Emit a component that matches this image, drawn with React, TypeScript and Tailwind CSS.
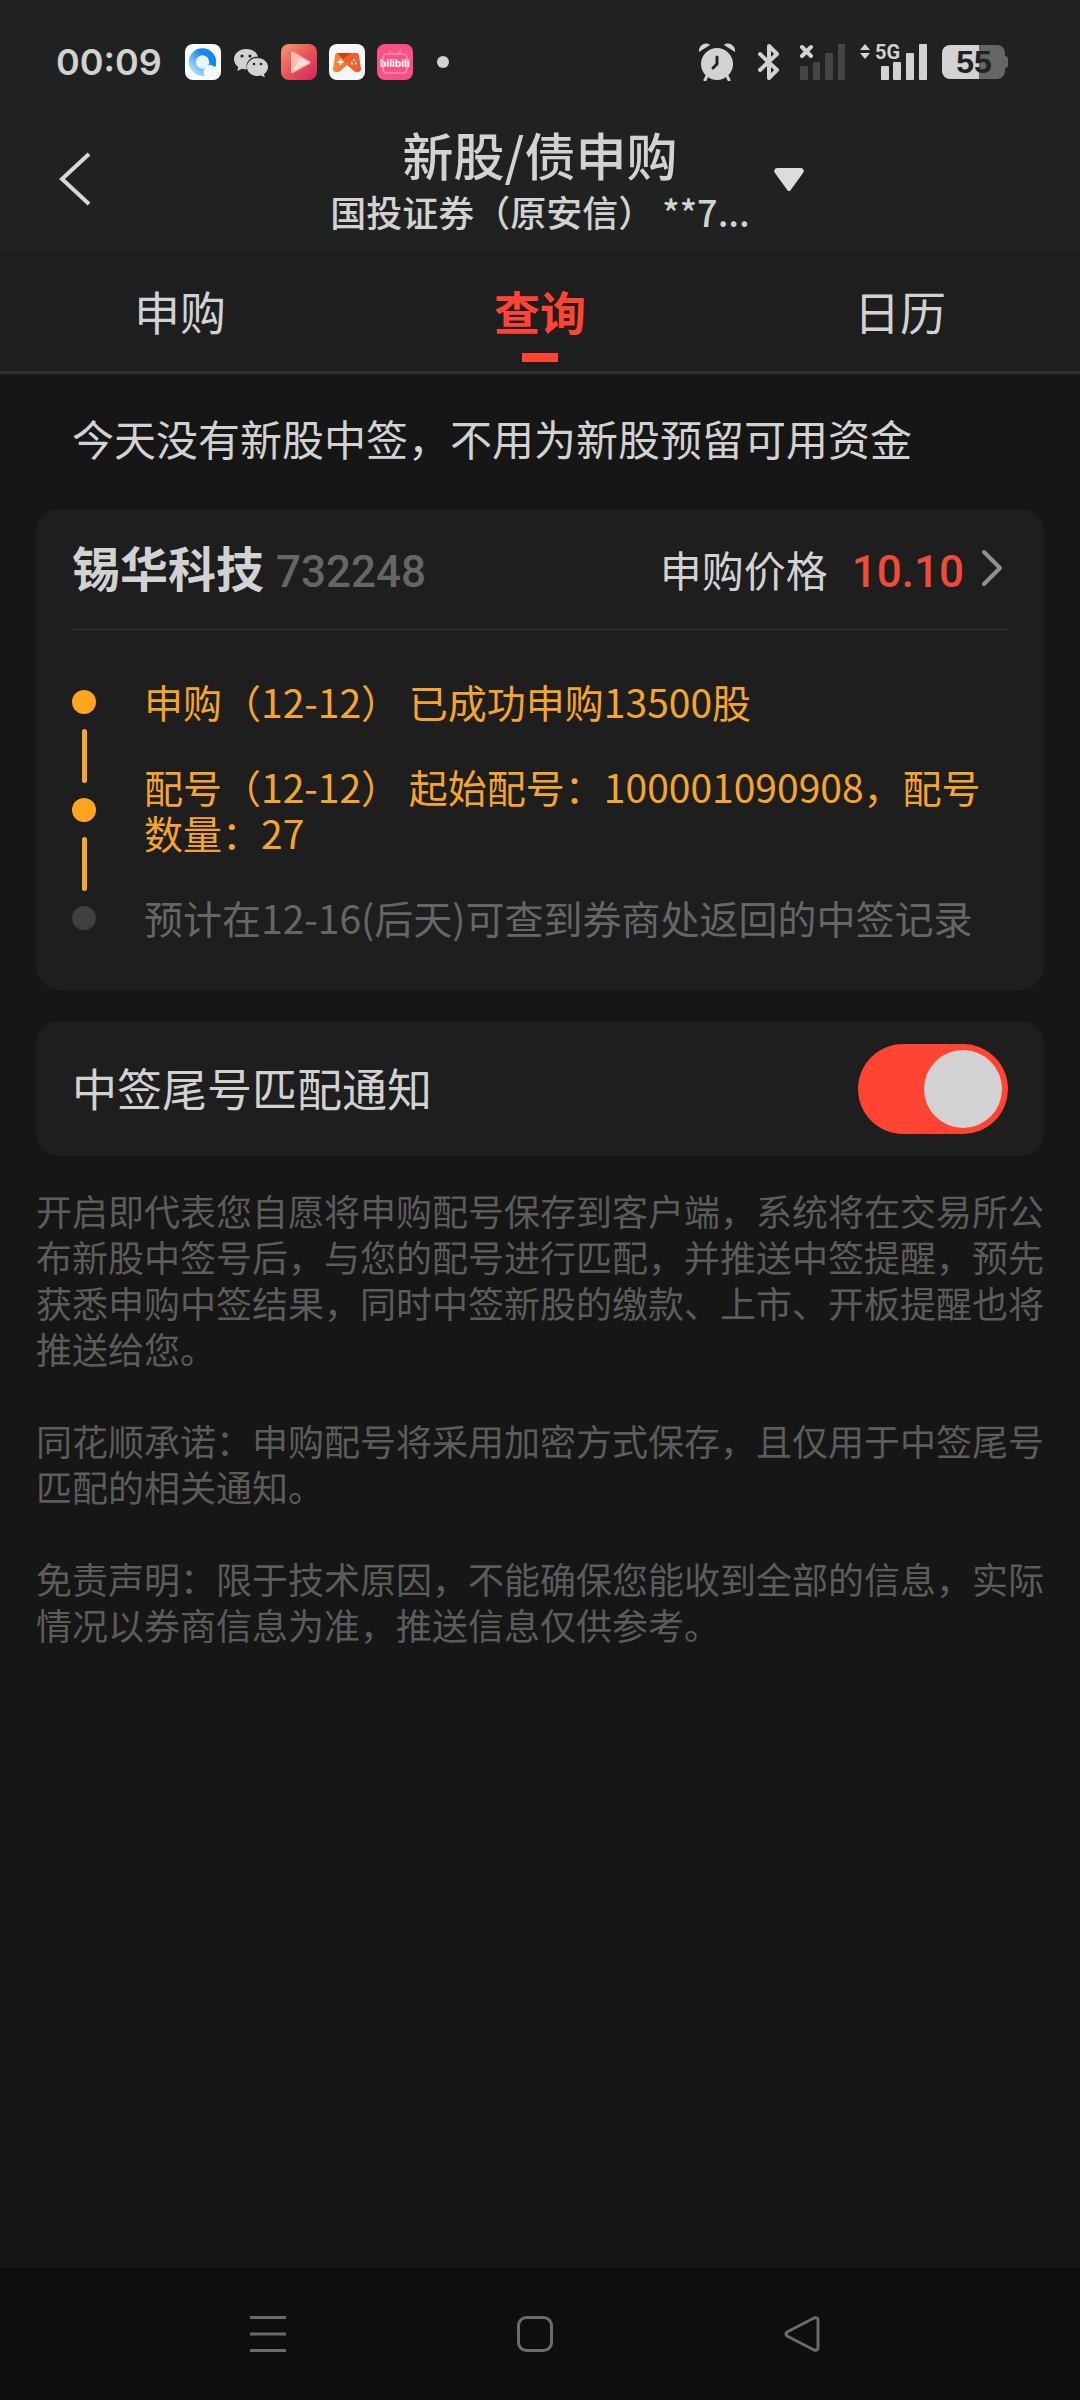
import { useState } from "react";

type Step = {
  id: number;
  text: string;
  done: boolean;
};

const tabs = [
  { key: "apply", label: "申购" },
  { key: "query", label: "查询" },
  { key: "calendar", label: "日历" },
];

const steps: Step[] = [
  { id: 1, text: "申购（12-12） 已成功申购13500股", done: true },
  { id: 2, text: "配号（12-12） 起始配号：100001090908，配号数量：27", done: true },
  { id: 3, text: "预计在12-16(后天)可查到券商处返回的中签记录", done: false },
];

const notes = [
  "开启即代表您自愿将申购配号保存到客户端，系统将在交易所公布新股中签号后，与您的配号进行匹配，并推送中签提醒，预先获悉申购中签结果，同时中签新股的缴款、上市、开板提醒也将推送给您。",
  "同花顺承诺：申购配号将采用加密方式保存，且仅用于中签尾号匹配的相关通知。",
  "免责声明：限于技术原因，不能确保您能收到全部的信息，实际情况以券商信息为准，推送信息仅供参考。",
];

const BrowserIcon = () => (
  <svg width="36" height="36" viewBox="0 0 36 36">
    <defs>
      <linearGradient id="ring" x1="1" y1="0" x2="0" y2="1">
        <stop offset="0.3" stopColor="#1687f0" />
        <stop offset="0.95" stopColor="#a6dcfb" />
      </linearGradient>
    </defs>
    <rect width="36" height="36" rx="8" fill="#fafbfc" />
    <path d="M31 18v12H18z" fill="#1f8ff2" />
    <circle cx="17.500" cy="18" r="10.200" fill="#e9f3fc" stroke="url(#ring)" strokeWidth="7" />
    <path d="M21 32a4.500 4.500 0 0 1-.5-8 5 5 0 0 1 8-1.500 4.800 4.800 0 0 1 3 9.500z" fill="#f4f8fd" />
  </svg>
);

const WechatIcon = () => (
  <svg width="36" height="36" viewBox="0 0 36 36" fill="#d2d2d2">
    <path d="M13 5C6.500 5 1 9.500 1 15.200c0 3.200 1.700 6 4.300 7.900L4.300 27l4.600-2.300c1.300.4 2.700.6 4.100.6h1c-2-8 4-13 11-12.600C24 8 19 5 13 5z" />
    <path d="M24.500 14C18.700 14 14 18 14 23s4.700 9 10.500 9c1.300 0 2.500-.2 3.600-.5l3.700 2-.8-3.300c2.400-1.700 4-4.200 4-7.200 0-5-4.700-9-10.500-9z" />
    <g fill="#202221">
      <circle cx="9" cy="12" r="1.600" />
      <circle cx="17" cy="12" r="1.600" />
      <circle cx="21" cy="20" r="1.300" />
      <circle cx="28" cy="20" r="1.300" />
    </g>
  </svg>
);

const VideoIcon = () => (
  <svg width="36" height="36" viewBox="0 0 36 36">
    <defs>
      <linearGradient id="video" x1="0" y1="0" x2="1" y2="1">
        <stop offset="0" stopColor="#f59a70" />
        <stop offset="0.5" stopColor="#e85558" />
        <stop offset="1" stopColor="#cf2460" />
      </linearGradient>
    </defs>
    <rect width="36" height="36" rx="8" fill="url(#video)" />
    <path d="M11.500 9v18.500L28 18.500z" fill="#f9bdb4" stroke="#f9bdb4" strokeWidth="3" strokeLinejoin="round" />
    <path d="M11.500 27.500L19 14l9 4.500z" fill="#fcdad5" />
  </svg>
);

const GameIcon = () => (
  <svg width="36" height="36" viewBox="0 0 36 36">
    <defs>
      <linearGradient id="pad" x1="0" y1="0" x2="1" y2="0">
        <stop offset="0" stopColor="#f58a3c" />
        <stop offset="0.5" stopColor="#f0702a" />
        <stop offset="1" stopColor="#ea5a3c" />
      </linearGradient>
    </defs>
    <rect width="36" height="36" rx="8" fill="#f7f7f7" />
    <path d="M9 9h18a3 3 0 0 1 3 3l2 13c0 2-1 3-3 3h-3l-8-7-8 7H7c-2 0-3-1-3-3l2-13a3 3 0 0 1 3-3z" fill="url(#pad)" />
    <path d="M8 9h20L18 19z" fill="#e03a12" />
    <path d="M28 9L18 19l-4-4 8-6z" fill="#f0602a" />
    <path d="M11.500 15v6M8.500 18h6" stroke="#fff" strokeWidth="1.800" />
    <g fill="#fff">
      <circle cx="25" cy="16" r="1" />
      <circle cx="23" cy="19.500" r="1" />
      <circle cx="27" cy="19.500" r="1" />
    </g>
  </svg>
);

const BilibiliIcon = () => (
  <svg className="overflow-visible" width="36" height="36" viewBox="0 0 36 36">
    <rect width="36" height="36" rx="8" fill="#fb4f86" />
    <rect x="6" y="10" width="24" height="19" rx="4" fill="none" stroke="#fd82a8" strokeWidth="2" />
    <path d="M12 6l3 4M24 6l-3 4" stroke="#fd82a8" strokeWidth="2" />
    <text x="18" y="23" textAnchor="middle" fontSize="11" fontWeight="700" fontFamily="Roboto, sans-serif" fill="#fff">bilibili</text>
  </svg>
);

const AlarmIcon = () => (
  <svg width="38" height="38" viewBox="0 0 38 38" fill="#d2d2d2">
    <circle cx="19" cy="21" r="16" />
    <path d="M1 9C0 3 7-2 12 2z" />
    <path d="M37 9c1-6-6-11-11-7z" />
    <path d="M9 33l-2 4M29 33l2 4" stroke="#d2d2d2" strokeWidth="3" strokeLinecap="round" />
    <path d="M19 14v7l-4 4" fill="none" stroke="#202221" strokeWidth="3" strokeLinecap="round" />
  </svg>
);

const BluetoothIcon = () => (
  <svg width="22" height="38" viewBox="0 0 22 38" fill="none" stroke="#d2d2d2" strokeWidth="4">
    <path d="M2 11l17 16-8 8V3l8 8L2 27" strokeLinejoin="round" strokeLinecap="round" />
  </svg>
);

const NoSignalIcon = () => (
  <svg width="46" height="38" viewBox="0 0 46 38">
    <g fill="#444645">
      <rect x="0" y="23" width="8" height="14" rx="1" />
      <rect x="13" y="19" width="7" height="18" rx="1" />
      <rect x="25" y="10" width="8" height="27" rx="1" />
      <rect x="38" y="1" width="7" height="36" rx="1" />
    </g>
    <path d="M2 4l9 9M11 4l-9 9" stroke="#d2d2d2" strokeWidth="4" strokeLinecap="round" />
  </svg>
);

const SignalIcon = () => (
  <svg className="overflow-visible" width="68" height="38" viewBox="0 0 68 38" fill="#d2d2d2">
    <path d="M0 7l5-6 5 6zM0 10h10l-5 6z" />
    <text x="15" y="16" fontSize="20" fontWeight="700" fontFamily="Roboto, sans-serif">5G</text>
    <rect x="21" y="23" width="8" height="14" rx="1" />
    <rect x="33" y="19" width="8" height="18" rx="1" />
    <rect x="46" y="10" width="8" height="27" rx="1" />
    <rect x="59" y="1" width="8" height="36" rx="1" />
  </svg>
);

const BatteryIcon = () => (
  <svg className="overflow-visible" width="67" height="34" viewBox="0 0 67 34">
    <path d="M8 0h29v34H8a8 8 0 0 1-8-8V8a8 8 0 0 1 8-8z" fill="#d2d2d2" />
    <path d="M37 0h18a8 8 0 0 1 8 8v3a3 3 0 0 1 3 3v6a3 3 0 0 1-3 3v3a8 8 0 0 1-8 8H37z" fill="#666" />
    <text x="32" y="28" textAnchor="middle" fontSize="32" fontWeight="700" fontFamily="Liberation Sans, sans-serif" fill="#202221">55</text>
  </svg>
);

const StatusBar = () => (
  <div className="flex h-[124px] items-center justify-between pl-14 pr-[71px]">
    <div className="flex items-center gap-3">
      <span className="mr-[11px] font-[Inter,sans-serif] text-[36px] font-semibold leading-none">00:09</span>
      <BrowserIcon />
      <WechatIcon />
      <VideoIcon />
      <GameIcon />
      <BilibiliIcon />
      <span className="ml-3 size-3 rounded-full bg-[#d2d2d2]" />
    </div>
    <div className="flex items-center">
      <AlarmIcon />
      <span className="ml-[22px]"><BluetoothIcon /></span>
      <span className="ml-5"><NoSignalIcon /></span>
      <span className="ml-3.5"><SignalIcon /></span>
      <span className="ml-3.5"><BatteryIcon /></span>
    </div>
  </div>
);

const App = () => {
  const [active, setActive] = useState("query");
  const [notify, setNotify] = useState(true);

  return (
    <div className="flex min-h-screen flex-col bg-[#161616] font-['Noto_Sans_CJK_SC',sans-serif] text-[#d2d2d2]">
      <header className="bg-[#202221]">
        <StatusBar />
        <div className="grid h-[127px] grid-cols-[1fr_auto_1fr] items-start">
          <button aria-label="返回" className="ml-14 mt-7 justify-self-start">
            <svg width="36" height="54" viewBox="0 0 36 54" fill="none" stroke="#d8d8d8" strokeWidth="4">
              <path d="M33 2L6 27l27 25" />
            </svg>
          </button>
          <div className="text-center font-medium">
            <h1 className="text-[51px] leading-[60px]">新股/债申购</h1>
            <p className="text-[36px] leading-[54px]">国投证券（原安信） **7...</p>
          </div>
          <button aria-label="切换账户" className="ml-6 mt-11 justify-self-start">
            <svg width="30" height="24" viewBox="0 0 30 24" fill="#dcdcdc">
              <path d="M3 0h24a3 3 0 0 1 2 5L16 23h-2L1 5a3 3 0 0 1 2-5z" />
            </svg>
          </button>
        </div>
      </header>

      <nav className="grid h-[123px] grid-cols-3 border-b-3 border-[#303030] bg-[#1e1e1e]">
        {tabs.map((tab) => (
          <button
            key={tab.key}
            onClick={() => setActive(tab.key)}
            className={
              tab.key === active
                ? "flex flex-col items-center pt-7 text-[46px] font-bold leading-[62px] text-[#ff4433]"
                : "flex flex-col items-center pt-7 text-[46px] leading-[62px]"
            }
          >
            {tab.label}
            {tab.key === active && <span className="mt-3 h-[9px] w-9 bg-[#ff4433]" />}
          </button>
        ))}
      </nav>

      <main className="flex-1 px-9">
        <p className="px-9 pt-9 text-[42px] leading-[56px]">今天没有新股中签，不用为新股预留可用资金</p>

        <section className="mt-[43px] rounded-3xl bg-[#1e1e1e] px-9 pb-[50px]">
          <a href="#detail" className="flex h-[121px] items-baseline border-b border-[#333] pt-[21px] leading-[72px]">
            <h2 className="text-[48px] font-bold">锡华科技</h2>
            <span className="ml-3 font-[Roboto,sans-serif] text-[44px] font-medium text-[#666]">732248</span>
            <span className="ml-auto text-[42px]">申购价格</span>
            <span className="ml-6 font-[Roboto,sans-serif] text-[44px] font-medium text-[#f04a3a]">10.10</span>
            <svg className="ml-4 mr-1" width="24" height="38" viewBox="0 0 24 38" fill="none" stroke="#909090" strokeWidth="4">
              <path d="M4 3l16 16L4 35" strokeLinecap="round" strokeLinejoin="round" />
            </svg>
          </a>
          <div className="flex gap-12 pt-12">
            <div className="flex flex-col items-center gap-[15px] pt-3">
              {steps.map((step, i) => (
                <div key={step.id} className="contents">
                  {i > 0 && <span className="h-[54px] w-[5px] rounded-full bg-[#f5a732]" />}
                  <span className={step.done ? "size-6 rounded-full bg-[#ffa51f]" : "size-6 rounded-full bg-[#404040]"} />
                </div>
              ))}
            </div>
            <ol className="flex flex-1 flex-col gap-[39px] text-[39px] leading-[46px]">
              {steps.map((step) => (
                <li key={step.id} className={step.done ? "text-[#f5a52c]" : "text-[#666]"}>
                  {step.text}
                </li>
              ))}
            </ol>
          </div>
        </section>

        <label className="mt-[31px] flex h-[135px] items-center justify-between rounded-3xl bg-[#1e1e1e] px-9 text-[45px]">
          <span className="pb-0.5">中签尾号匹配通知</span>
          <input
            type="checkbox"
            role="switch"
            checked={notify}
            onChange={(e) => setNotify(e.target.checked)}
            className="h-[90px] w-[150px] appearance-none rounded-full bg-[#444] p-1.5 before:block before:size-[78px] before:rounded-full before:bg-[#d2d2d2] checked:bg-[#ff4433] checked:before:ml-[60px]"
          />
        </label>

        <div className="mt-[31px] flex flex-col gap-[46px] text-[36px] leading-[46px] text-[#5c5c5c]">
          {notes.map((note) => (
            <p key={note}>{note}</p>
          ))}
        </div>
      </main>

      <footer className="grid h-[132px] grid-cols-3 items-center justify-items-center bg-[#0e0e0e] pl-[134px] pr-36">
        <button aria-label="最近任务">
          <svg width="36" height="36" viewBox="0 0 36 36" stroke="#6b6b6b" strokeWidth="3">
            <path d="M0 1.500h36M0 18h36M0 34.500h36" />
          </svg>
        </button>
        <button aria-label="主屏幕">
          <svg width="36" height="36" viewBox="0 0 36 36" fill="none" stroke="#6b6b6b" strokeWidth="3">
            <rect x="1.500" y="1.500" width="33" height="33" rx="8" />
          </svg>
        </button>
        <button aria-label="后退">
          <svg width="36" height="36" viewBox="0 0 36 36" fill="none" stroke="#6b6b6b" strokeWidth="3">
            <path d="M30 2L3 16q-2 2 0 4l27 14q4 1 4-2V4q0-3-4-2z" strokeLinejoin="round" />
          </svg>
        </button>
      </footer>
    </div>
  );
};

export default App;
